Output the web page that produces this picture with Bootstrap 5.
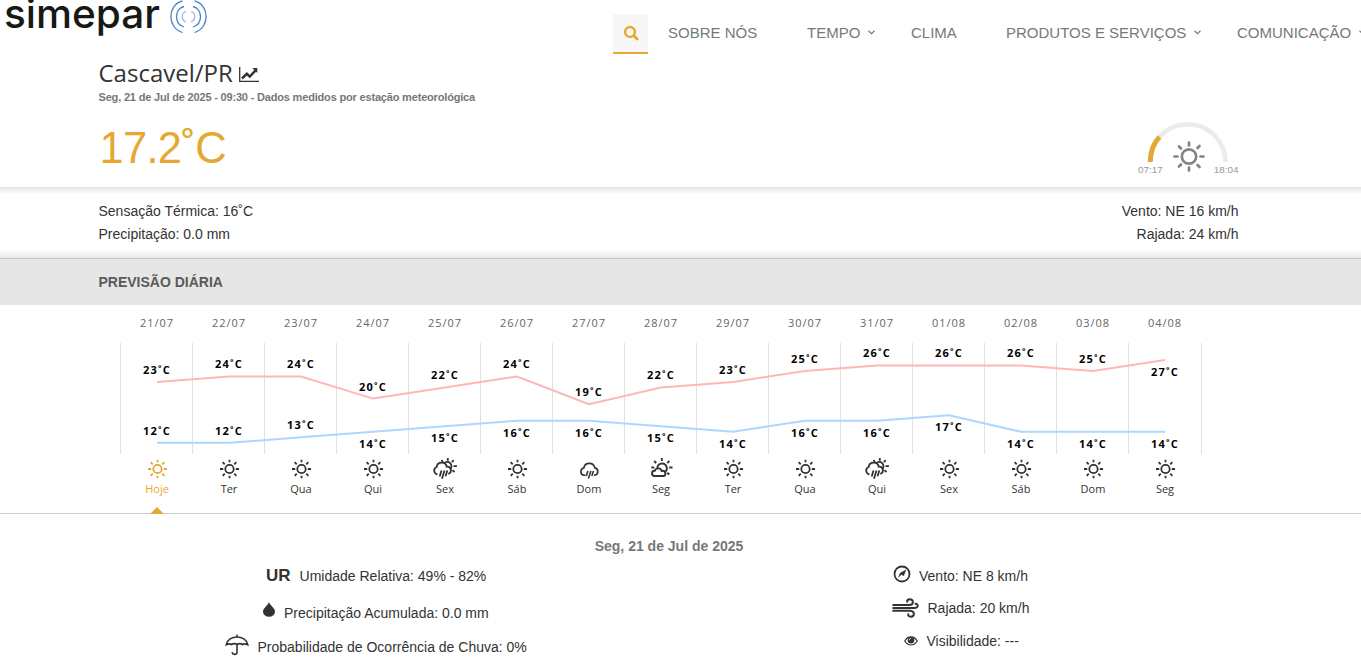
<!DOCTYPE html>
<html lang="pt-br">
<head>
<meta charset="utf-8">
<meta name="viewport" content="width=device-width, initial-scale=1">
<title>Simepar - Cascavel/PR</title>
<link href="https://cdn.jsdelivr.net/npm/bootstrap@5.3.0/dist/css/bootstrap.min.css" rel="stylesheet">
<style>
body{font-family:"Liberation Sans",Arial,sans-serif;font-size:14px;line-height:20px;color:#333;height:662px;overflow:hidden;background:#fff}
svg{display:block;flex:none}
.wrap{margin-left:98.500px;width:1140px}
.topbar{height:56px;white-space:nowrap}
.menu{margin-left:404px;padding-top:14px;font-size:15px;line-height:37px;height:51px;color:#737a7d}
.menu a{color:inherit;text-decoration:none}
.menu .search{width:35px;height:40px;background:#f7f7f7;border-bottom:2px solid #e5a82f}
.current{height:131px}
.city{font:24px/32px "Open Sans",sans-serif;padding-top:1px;color:#333}
.city svg{margin:9px 0 0 6px}
.station{font-size:11px;line-height:16px;color:#777;font-weight:700;letter-spacing:-.18px}
.now{font-size:43.500px;line-height:50px;color:#e5a832;margin:18px 0 0 1px;letter-spacing:-.7px}
.sunpath{margin-top:65px}
.details{height:71px;padding-top:13px;line-height:23px;background:linear-gradient(#e2e2e2,#fff 7px,#fff 63px,#e9e9e9)}
.band{height:47px;background:#e6e6e6;border-top:1px solid #c8c8c8;color:#5a5a5a;font-weight:700;line-height:46px}
.forecast{height:209px;border-bottom:1px solid #ccc;padding-left:121px;font-family:"Open Sans",sans-serif}
.dates,.days{width:1080px;text-align:center}
.dates>div,.days>div{width:72px}
.dates{font-size:11px;line-height:16px;letter-spacing:1px;padding-top:10px;height:38px;color:#666}
.days{font-size:11px;line-height:16px;height:60px;color:#333}
.days svg{margin:3px 0 0 24px}
.days .today{color:#e5a832}
.days .marker{margin:10px 0 0 29px}
.chart text{font:700 11px "Open Sans",sans-serif;letter-spacing:1.200px;text-anchor:middle;fill:#000}
.daytitle{font-weight:700;color:#777;width:1338px;padding-top:22px;line-height:20px}
.ur{font-size:17px;font-weight:700}
</style>
</head>
<body>
<svg width="0" height="0" class="position-absolute">
<defs>
<symbol id="sun" viewBox="0 0 24 24"><g fill="none" stroke="currentColor" stroke-width="1.8"><circle cx="12.500" cy="12" r="4.200"/><path d="M12.500 2.700v2.600M12.500 18.700v2.600M3 12h3.200M18.800 12H22M5.700 5.200l2 2.100M17.300 16.700l2 2.100M5.700 18.800l2-2.100M17.300 7.300l2-2.100"/></g></symbol>
<symbol id="rain" viewBox="0 0 24 24"><g fill="none" stroke="currentColor" stroke-width="1.6"><path d="M8.400 18.300H7.300a3.700 3.700 0 0 1-.5-7.300 5.600 5.600 0 0 1 11-.1 3.700 3.700 0 0 1-.2 7.300h-.7"/><path d="M10.900 14l-1.700 5M13.900 14l-2.500 7.500M16.500 14l-1.700 5"/></g></symbol>
<symbol id="sunrain" viewBox="0 0 24 24"><g fill="none" stroke="currentColor" stroke-width="1.8"><path d="M4.500 17.300A3.800 3.800 0 0 1 3.600 10a5.200 5.200 0 0 1 10.200-.3 3.700 3.700 0 0 1 1.500 7.200"/><path d="M8.500 13.500l-1.800 6M11.500 13.500l-2.500 8.200M14.300 13.500l-1.700 5.800M11.300 6.200a4 4 0 1 1 6 5.800M14.800 1v2.700M8.500 3l1.500 2M20.700 3.200l-1.800 2M20.500 9.200h3.400M19.500 13.200l2 2"/></g></symbol>
<symbol id="suncloud" viewBox="0 0 24 24"><g fill="none" stroke="currentColor" stroke-width="1.9"><path d="M5.500 19a2.600 2.600 0 0 1 .2-5.200 3.700 3.700 0 0 1 7 .2 2.500 2.500 0 0 1 2 5z"/><path d="M8.400 11.500a4.700 4.700 0 1 1 7.200 3.700M12.800 1v3M5.200 4l2 2M20.300 4l-2 2M2.300 10.500h3M20.200 10.500h3.300M18.300 15.700l2 2"/></g></symbol>
</defs>
</svg>

<nav class="topbar d-flex align-items-start">
  <svg width="209" height="36" viewBox="0 0 209 36">
    <text x="4" y="28" font-family="Inter,sans-serif" font-size="40" font-weight="500" fill="#171915" textLength="156" lengthAdjust="spacingAndGlyphs">simepar</text>
    <g fill="none" stroke="#4d7fc4" stroke-width="1.3"><path d="M182.500 .9C167 5 167 28 182.500 32.500M194.500 .9C210 5 210 28 194.500 32.500"/><path d="M184 6.500C174 9 174 24 184 27M193 6.500C203 9 203 24 193 27"/><path stroke="#9db9df" d="M186 11.500C181 13 181 20 186 22M191 11.500C196 13 196 20 191 22"/></g>
  </svg>
  <div class="menu d-flex">
    <a href="#" class="search d-flex justify-content-center align-items-center"><svg width="16" height="16" viewBox="0 0 16 16" fill="none" stroke="#e5a82f"><circle cx="7" cy="7" r="4.900" stroke-width="2.500"/><path d="M10.800 10.800l3.300 3.200" stroke-width="2.800" stroke-linecap="round"/></svg></a>
    <a href="#" style="margin-left:20px;width:139px">SOBRE NÓS</a>
    <a href="#" class="d-flex align-items-center" style="width:104px">TEMPO<svg class="ms-2" width="7" height="5" viewBox="0 0 7 5" fill="none" stroke="currentColor" stroke-width="1.200"><path d="M.5 .8l3 2.900 3-2.900"/></svg></a>
    <a href="#" style="width:95px">CLIMA</a>
    <a href="#" class="d-flex align-items-center" style="width:231px">PRODUTOS E SERVIÇOS<svg class="ms-2" width="7" height="5" viewBox="0 0 7 5" fill="none" stroke="currentColor" stroke-width="1.200"><path d="M.5 .8l3 2.900 3-2.900"/></svg></a>
    <a href="#" class="d-flex align-items-center">COMUNICAÇÃO<svg class="ms-2" width="7" height="5" viewBox="0 0 7 5" fill="none" stroke="currentColor" stroke-width="1.200"><path d="M.5 .8l3 2.900 3-2.900"/></svg></a>
  </div>
</nav>

<section class="current">
  <div class="wrap d-flex justify-content-between">
    <div>
      <div class="city d-flex align-items-start">Cascavel/PR<svg width="20" height="17" viewBox="0 0 20 17"><path d="M.7 1v14.300H20" fill="none" stroke="#333" stroke-width="1.300"/><path d="M3 12.500l4.800-4.700 3 2.800 5.600-6" fill="none" stroke="#333" stroke-width="2.500"/><path d="M13.300 2h5v5z" fill="#333"/></svg></div>
      <div class="station">Seg, 21 de Jul de 2025 - 09:30 - Dados medidos por estação meteorológica</div>
      <div class="now">17.2˚C</div>
    </div>
    <svg class="sunpath" width="102" height="56" viewBox="0 0 102 56">
      <path d="M13 41a37.500 37.500 0 0 1 75.500 0" fill="none" stroke="#eceaea" stroke-width="4.500"/>
      <path d="M13.200 41q.5-16 9.300-25" fill="none" stroke="#e5a832" stroke-width="5"/>
      <g fill="none" stroke="#848484" stroke-width="2.700" stroke-linecap="round"><circle cx="52" cy="35.500" r="7.200"/><path d="M52 21.500v3M52 46.500v3M37.500 35.500h3M63.500 35.500h3M42 25.500l2 2M60.500 44l2 2M42 45.500l2-2M60.500 27l2-2"/></g>
      <text x="1" y="51.500" font-size="9.900" fill="#999">07:17</text><text x="101.500" y="51.500" font-size="9.900" fill="#999" text-anchor="end">18:04</text>
    </svg>
  </div>
</section>

<section class="details">
  <div class="wrap d-flex justify-content-between">
    <div>Sensação Térmica: 16˚C<br>Precipitação: 0.0 mm</div>
    <div class="text-end">Vento: NE 16 km/h<br>Rajada: 24 km/h</div>
  </div>
</section>

<div class="band"><div class="wrap">PREVISÃO DIÁRIA</div></div>

<section class="forecast">
  <div class="dates d-flex" id="dates"></div>
  <svg class="chart" id="chart" width="1082" height="111" viewBox="0 0 1082 111" style="margin-left:-1px"></svg>
  <div class="days d-flex" id="days"></div>
</section>

<section>
  <div class="daytitle text-center">Seg, 21 de Jul de 2025</div>
  <div class="d-flex">
    <div style="width:665px">
      <div class="d-flex align-items-center" style="height:40px;padding-left:266px"><span class="ur">UR</span><span style="margin-left:9px">Umidade Relativa: 49% - 82%</span></div>
      <div class="d-flex align-items-center" style="height:34px;padding-left:263px"><svg width="12" height="15" viewBox="0 0 12 15" style="margin-bottom:7px"><path d="M6 0C5 3.500 0 6 0 9.500a6 5.300 0 0 0 12 0C12 6 7 3.500 6 0z" fill="#333"/></svg><span style="margin-left:9px">Precipitação Acumulada: 0.0 mm</span></div>
      <div class="d-flex align-items-center" style="height:34px;padding-left:225px"><svg width="24" height="22" viewBox="0 0 24 22" fill="none" stroke="#333" stroke-width="1.600" style="margin-bottom:4px"><path d="M12 .5v3M1.200 10.800C3 .300 21 .300 22.800 10.800c-2.500-1.300-4-1.300-5.300-.3-2-1.200-3.500-1.200-5.500 0-2-1.200-3.500-1.200-5.500 0-1.300-1-2.800-1-5.300.3zM12 10.500V18c0 3.200-4.800 3.200-4.800 0"/></svg><span style="margin-left:8.500px">Probabilidade de Ocorrência de Chuva: 0%</span></div>
    </div>
    <div>
      <div class="d-flex align-items-center" style="height:40px;padding-left:228px"><svg width="18" height="18" viewBox="0 0 18 18" style="margin-bottom:4px"><circle cx="9" cy="9" r="7.500" fill="none" stroke="#333" stroke-width="1.800"/><path d="M13.300 4.500L10.800 11 8.300 9.700 5 13l2-5z" fill="#333"/></svg><span style="margin-left:8px">Vento: NE 8 km/h</span></div>
      <div class="d-flex align-items-center" style="height:24px;padding-left:227px"><svg width="27" height="20" viewBox="0 0 27 20" fill="none" stroke="#333" stroke-width="2" stroke-linecap="round"><path d="M1.200 7H17c5.500-.2 4.500-5.800.8-5.800-2 0-3 1.300-2.500 2.600M1.200 9.900H23c3.500-.2 3.500-4.200.5-4.200M1.200 12.800H18c5.500.5 4.500 5.900.8 5.900-2 0-3-1.200-2.500-2.500"/></svg><span style="margin-left:8.500px">Rajada: 20 km/h</span></div>
      <div class="d-flex align-items-center" style="height:42px;padding-left:239px"><svg width="14" height="10" viewBox="0 0 14 10"><path d="M.7 5C4-.5 10-.5 13.300 5 10 10.300 4 10.300.7 5z" fill="none" stroke="#333" stroke-width="1.200"/><circle cx="7" cy="4.200" r="3.300" fill="#333"/><path d="M5.300 4.200q0-1.800 1.700-1.800" fill="none" stroke="#fff" stroke-width=".7"/></svg><span style="margin-left:8.500px">Visibilidade: ---</span></div>
    </div>
  </div>
</section>

<script>
// [date, weekday, icon, max, max label baseline, min, min label baseline]
const days = [
 ['21/07','Hoje','sun',23,31,12,92],['22/07','Ter','sun',24,25,12,92],['23/07','Qua','sun',24,25,13,86],
 ['24/07','Qui','sun',20,48,14,105],['25/07','Sex','sunrain',22,36,15,99],['26/07','Sáb','sun',24,25,16,94],
 ['27/07','Dom','rain',19,53,16,94],['28/07','Seg','suncloud',22,36,15,99],['29/07','Ter','sun',23,31,14,105],
 ['30/07','Qua','sun',25,20,16,94],['31/07','Qui','sunrain',26,14,16,94],['01/08','Sex','sun',26,14,17,88],
 ['02/08','Sáb','sun',26,14,14,105],['03/08','Dom','sun',25,20,14,105],['04/08','Seg','sun',27,33,14,105]];
const y = t => (39 + (23 - t) * 5.53).toFixed(1);
const x = i => 37 + 72 * i;
const line = (k, color) => `<polyline fill="none" stroke="${color}" stroke-width="2" points="${days.map((d,i)=>x(i)+','+y(d[k])).join(' ')}"/>`;
let s = '';
for (let i = 0; i <= 15; i++) s += `<path d="M${i === 15 ? 1081.5 : 72*i+.5} 0v111" stroke="#e0e0e0"/>`;
s += line(3, '#ffb6b6') + line(5, '#aed7ff');
days.forEach((d,i) => s += `<text x="${x(i)}" y="${d[4]}">${d[3]}˚C</text><text x="${x(i)}" y="${d[6]}">${d[5]}˚C</text>`);
chart.innerHTML = s;
dates.innerHTML = days.map(d => `<div>${d[0]}</div>`).join('');
document.getElementById('days').innerHTML = days.map((d,i) => `<div class="${i ? '' : 'today'}"><svg width="24" height="24"><use href="#${d[2]}"/></svg>${d[1]}${i ? '' : '<svg class="marker" width="14" height="7"><path d="M7 0l7 7H0z" fill="currentColor"/></svg>'}</div>`).join('');
</script>
<script src="https://cdn.jsdelivr.net/npm/bootstrap@5.3.0/dist/js/bootstrap.bundle.min.js"></script>
</body>
</html>
